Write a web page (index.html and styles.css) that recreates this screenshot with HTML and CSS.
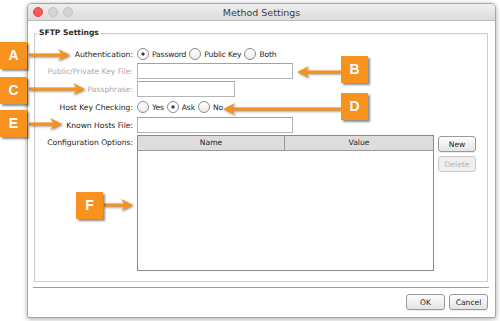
FILE: index.html
```html
<!DOCTYPE html>
<html lang="en">
<head>
  <meta charset="UTF-8">
  <title>Method Settings</title>
  <link rel="stylesheet" href="styles.css">
</head>
<body>
  <div class="stage">
      <div class="window">
          <div class="titlebar">
              <div class="lights">
                  <span class="light close"></span>
                  <span class="light"></span>
                  <span class="light"></span>
              </div>
              <div class="title">Method Settings</div>
          </div>
          <div class="body">
              <fieldset class="group">
                  <legend>SFTP Settings</legend>
                  <div class="form">
                      <span class="lbl">Authentication:</span>
                      <div class="radios">
                          <span class="radio on">Password</span>
                          <span class="radio">Public Key</span>
                          <span class="radio">Both</span>
                      </div>

                      <span class="lbl off">Public/Private Key File:</span>
                      <div class="field wide"></div>

                      <span class="lbl off">Passphrase:</span>
                      <div class="field short"></div>

                      <span class="lbl">Host Key Checking:</span>
                      <div class="radios">
                          <span class="radio">Yes</span>
                          <span class="radio on">Ask</span>
                          <span class="radio">No</span>
                      </div>

                      <span class="lbl">Known Hosts File:</span>
                      <div class="field wide"></div>

                      <span class="lbl top">Configuration Options:</span>
                      <div class="config">
                          <div class="table">
                              <div class="thead">
                                  <span>Name</span>
                                  <span>Value</span>
                              </div>
                          </div>
                          <div class="side-btns">
                              <button class="btn">New</button>
                              <button class="btn" disabled>Delete</button>
                          </div>
                      </div>
                  </div>
              </fieldset>
              <div class="footer">
                  <button class="btn">OK</button>
                  <button class="btn">Cancel</button>
              </div>
          </div>
      </div>

      <svg class="arrows" width="500" height="321" viewBox="0 0 500 321">
          <!-- right pointing -->
          <polygon points="29,53.5 61,53.5 58,49 70,55 58,61 61,56.5 29,56.5"/>
          <polygon points="29,87.5 76,87.5 73,83 85,89 73,95 76,90.5 29,90.5"/>
          <polygon points="29,122.5 53,122.5 50,118 62,124 50,130 53,125.5 29,125.5"/>
          <polygon points="104,203.5 124,203.5 121,199 133,205 121,211 124,206.5 104,206.5"/>
          <!-- left pointing -->
          <polygon points="341,70.5 306,70.5 309,66 297,72 309,78 306,73.5 341,73.5"/>
          <polygon points="341,107.5 232,107.5 235,103 223,109 235,115 232,110.5 341,110.5"/>
      </svg>

      <div class="badge badge-a">A</div>
      <div class="badge badge-b">B</div>
      <div class="badge badge-c">C</div>
      <div class="badge badge-d">D</div>
      <div class="badge badge-e">E</div>
      <div class="badge badge-f">F</div>
  </div>
</body>
</html>
```

FILE: styles.css
```css
* {
    margin: 0;
    padding: 0;
    box-sizing: border-box;
}

body {
    background: #fff;
    font-family: 'DejaVu Sans', sans-serif;
    font-size: 7.6px;
    color: #1c1c1c;
}

.stage {
    position: relative;
    width: 500px;
    height: 321px;
    overflow: hidden;
}

/* window */

.window {
    margin: 3px 0 0 27px;
    width: 469px;
    border: 1px solid #a6a6a6;
    border-radius: 5px 5px 2px 2px;
    background: #fff;
    box-shadow: 0 1px 5px rgba(0, 0, 0, 0.35);
}

.titlebar {
    display: grid;
    grid-template-columns: 1fr auto 1fr;
    align-items: center;
    height: 17px;
    border-bottom: 1px solid #bcbcbc;
    border-radius: 4px 4px 0 0;
    background: linear-gradient(#eeeeee, #dcdcdc);
}

.lights {
    display: flex;
    gap: 5px;
    padding-left: 5px;
}

.light {
    width: 10px;
    height: 10px;
    border-radius: 50%;
    background: #d3d3d3;
    border: 1px solid #c3c3c3;
}

.light.close {
    background: #fc5b57;
    border-color: #e2453f;
}

.title {
    font-size: 9.5px;
    color: #3c3c3c;
}

.body {
    padding: 7px 7px 7px 6px;
}

/* group box */

.group {
    border: 1px solid #cfcfcf;
    box-shadow: inset 1px 1px 0 #f4f4f4;
    padding: 0 0 10px 0;
    min-width: 0;
}

.group legend {
    margin-left: 2px;
    padding: 0 2px;
    font-weight: bold;
    line-height: 10px;
    color: #2a2a2a;
}

.form {
    display: grid;
    grid-template-columns: 98px 1fr;
    grid-template-rows: 14px 16px 16px 16px 16px 136px;
    column-gap: 4px;
    row-gap: 2px;
    margin-top: 9px;
}

.lbl {
    text-align: right;
    align-self: center;
    white-space: nowrap;
}

.lbl.off {
    color: #a9a9a9;
}

.lbl.top {
    align-self: start;
    padding-top: 3px;
}

.radios {
    display: flex;
    align-items: center;
    gap: 3px;
    letter-spacing: -0.15px;
}

.radio {
    display: inline-flex;
    align-items: center;
    gap: 3px;
}

.radio::before {
    content: '';
    width: 10px;
    height: 10px;
    border: 1px solid #8d8d8d;
    border-radius: 50%;
    background: linear-gradient(#fff, #ececec);
}

.radio.on::before {
    background: radial-gradient(circle, #3a3a3a 0 1.2px, #fff 2px);
}

.field {
    height: 16px;
    border: 1px solid #b4b4b4;
    border-top-color: #a2a2a2;
    background: #fff;
}

.field.wide {
    width: 156px;
}

.field.short {
    width: 98px;
}

/* configuration table */

.config {
    display: flex;
    align-items: flex-start;
    gap: 4px;
}

.table {
    width: 297px;
    height: 136px;
    border: 1px solid #8a8a8a;
    background: #fff;
}

.thead {
    display: grid;
    grid-template-columns: 147px 1fr;
    height: 15px;
    background: #dddddd;
    border-bottom: 1px solid #999;
}

.thead span {
    text-align: center;
    line-height: 14px;
}

.thead span:first-child {
    border-right: 1px solid #999;
}

.side-btns {
    display: flex;
    flex-direction: column;
    gap: 4px;
    padding-top: 1px;
}

.btn {
    width: 38px;
    height: 16px;
    font-family: 'DejaVu Sans', sans-serif;
    font-size: 7.6px;
    color: #1c1c1c;
    border: 1px solid #9a9a9a;
    border-radius: 3px;
    background: linear-gradient(#fdfdfd, #e4e4e4);
    box-shadow: 0 1px 0 rgba(0, 0, 0, 0.08);
}

.btn:disabled {
    color: #b2b2b2;
    border-color: #c8c8c8;
    background: #efefef;
    box-shadow: none;
}

.footer {
    display: flex;
    justify-content: flex-end;
    gap: 4px;
    margin: 5px -1px 0 -1px;
    padding: 6px 1px 0 0;
    border-top: 1px solid #9d9d9d;
}

.footer .btn {
    width: 39px;
}

/* annotations */

.arrows {
    position: absolute;
    top: 0;
    left: 0;
    fill: #f7921e;
    filter: drop-shadow(1px 1.5px 0.8px rgba(0, 0, 0, 0.45));
    pointer-events: none;
}

.badge {
    position: absolute;
    width: 27px;
    height: 27px;
    background: #f7921e;
    color: #fff;
    font-family: 'Liberation Sans', sans-serif;
    font-weight: bold;
    font-size: 14px;
    line-height: 27px;
    text-align: center;
    box-shadow: 2px 2px 2px rgba(0, 0, 0, 0.45);
}

.badge-a { left: 0; top: 42px; }
.badge-b { left: 341px; top: 56px; }
.badge-c { left: 0; top: 77px; }
.badge-d { left: 341px; top: 93px; }
.badge-e { left: 0; top: 110px; }
.badge-f { left: 76px; top: 192px; }
```
